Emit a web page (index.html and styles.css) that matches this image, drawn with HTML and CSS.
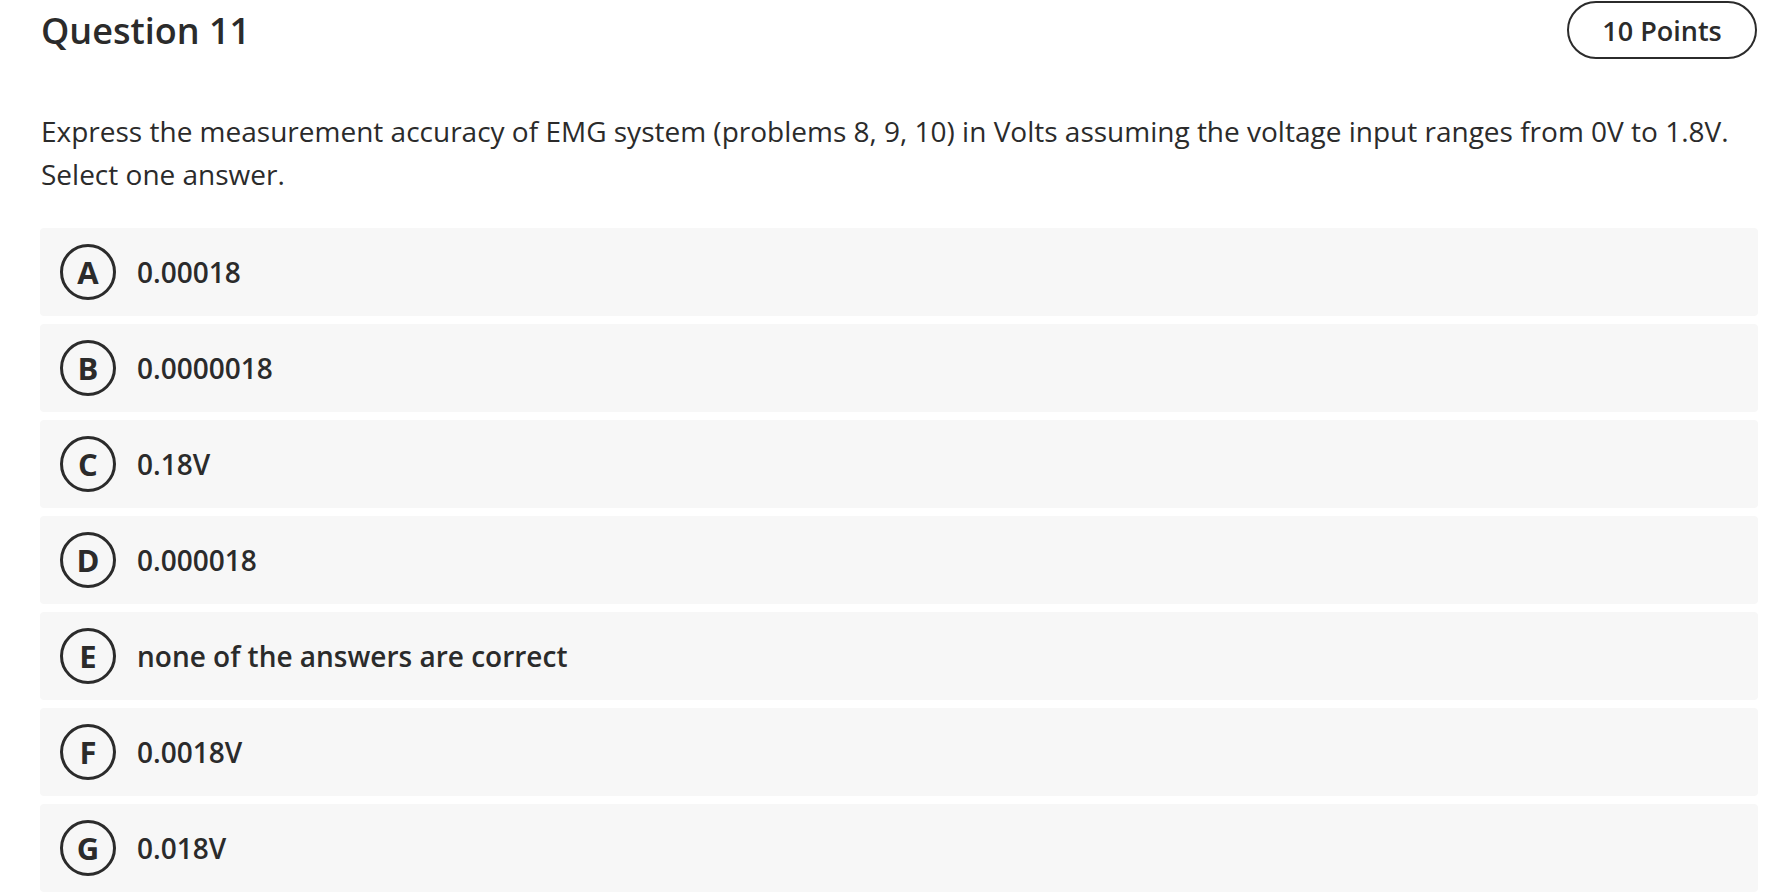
FILE: index.html
```html
<!DOCTYPE html>
<html lang="en">
<head>
<meta charset="utf-8">
<title>Question 11</title>
<link rel="stylesheet" href="styles.css">
</head>
<body>
<div class="page">
  <header class="head">
    <h1 class="title">Question 11</h1>
    <div class="points">10 Points</div>
  </header>
  <p class="prompt">Express the measurement accuracy of EMG system (problems 8, 9, 10) in Volts assuming the voltage input ranges from 0V to 1.8V.<br>Select one answer.</p>
  <ul class="options">
    <li class="option"><span class="letter">A</span><span class="answer">0.00018</span></li>
    <li class="option"><span class="letter">B</span><span class="answer">0.0000018</span></li>
    <li class="option"><span class="letter">C</span><span class="answer">0.18V</span></li>
    <li class="option"><span class="letter">D</span><span class="answer">0.000018</span></li>
    <li class="option"><span class="letter">E</span><span class="answer">none of the answers are correct</span></li>
    <li class="option"><span class="letter">F</span><span class="answer">0.0018V</span></li>
    <li class="option"><span class="letter">G</span><span class="answer">0.018V</span></li>
  </ul>
</div>
</body>
</html>
```
FILE: styles.css
```css
html, body {
  margin: 0;
  padding: 0;
  background: #ffffff;
}
body {
  font-family: "Open Sans", "Liberation Sans", sans-serif;
  color: #2b2b2b;
}
.page {
  padding: 1px 24px 0 40px;
}
.head {
  display: flex;
  justify-content: space-between;
  align-items: center;
  height: 58px;
}
.title {
  margin: 0;
  font-size: 36px;
  font-weight: 600;
  line-height: 49px;
  padding-left: 1px;
}
.points {
  box-sizing: border-box;
  height: 58px;
  width: 190px;
  border: 2px solid #2b2b2b;
  border-radius: 29px;
  display: flex;
  align-items: center;
  justify-content: center;
  font-size: 27px;
  font-weight: 600;
  margin-right: 1px;
}
.prompt {
  margin: 51px 0 0 0;
  font-size: 28px;
  line-height: 43px;
  padding-left: 1px;
  white-space: nowrap;
}
.options {
  list-style: none;
  margin: 32px 0 0 0;
  padding: 0;
  display: flex;
  flex-direction: column;
  gap: 8px;
}
.option {
  display: flex;
  align-items: center;
  gap: 21px;
  height: 88px;
  padding-left: 20px;
  background: #f7f7f7;
  border-radius: 4px;
}
.letter {
  box-sizing: border-box;
  width: 56px;
  height: 56px;
  border: 3px solid #2b2b2b;
  border-radius: 50%;
  display: flex;
  align-items: center;
  justify-content: center;
  font-size: 31px;
  font-weight: 700;
}
.answer {
  font-size: 28px;
  font-weight: 600;
}
```
